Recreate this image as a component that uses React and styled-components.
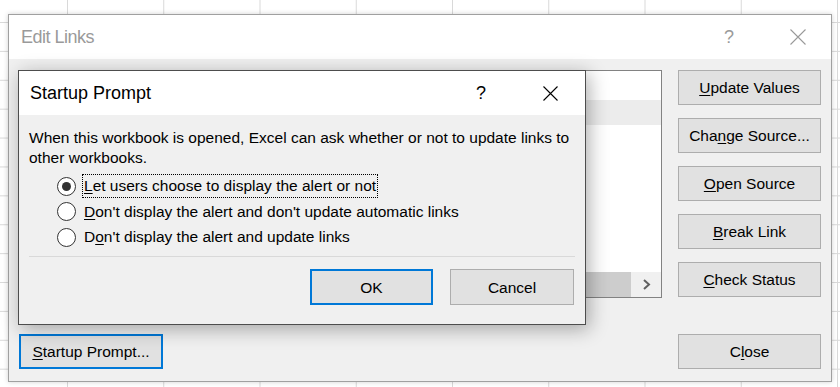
import styled, { createGlobalStyle, css } from "styled-components";

const GlobalStyle = createGlobalStyle`
  html, body {
    margin: 0;
    padding: 0;
    background: #fff;
  }
  body {
    font-family: "Liberation Sans", Arial, sans-serif;
    color: #000;
  }
`;

const Sheet = styled.div`
  width: 840px;
  height: 387px;
  overflow: hidden;
  box-sizing: border-box;
  padding: 14px 0 0 8px;
  background-color: #fff;
  background-image: linear-gradient(to right, #d9d9d9 1px, transparent 1px),
    linear-gradient(to bottom, #d9d9d9 1px, transparent 1px);
  background-size: 96.25px 28.9px;
  background-position: 67px 22px;
`;

const Window = styled.div`
  position: relative;
  width: 824px;
  height: 368px;
  box-sizing: border-box;
  border: 1px solid #a0a0a0;
  background: #f0f0f0;
  box-shadow: 0 0 5px rgba(0, 0, 0, 0.18);
  display: flex;
  flex-direction: column;
`;

const TitleBar = styled.div`
  flex-shrink: 0;
  height: 44px;
  display: flex;
  align-items: center;
  justify-content: space-between;
  padding: 0 ${(p) => p.$right}px 0 ${(p) => p.$left}px;
  background: #fff;
`;

const Title = styled.span`
  font-size: 18px;
  color: ${(p) => (p.$dim ? "#9a9a9a" : "#000")};
  letter-spacing: ${(p) => (p.$tight ? "-0.5px" : "0")};
`;

const TitleTools = styled.div`
  display: flex;
  align-items: center;
  gap: ${(p) => p.$gap}px;
  color: ${(p) => (p.$dim ? "#9a9a9a" : "#000")};
`;

const Help = styled.span`
  font-size: 18px;
  line-height: 18px;
`;

const Body = styled.div`
  flex: 1;
  display: flex;
  flex-direction: column;
  justify-content: space-between;
  padding: 11px 10px 12px 10px;
`;

const MainRow = styled.div`
  display: flex;
  justify-content: space-between;
  align-items: flex-start;
`;

const LinkList = styled.div`
  margin-left: 2px;
  width: 641px;
  height: 228px;
  box-sizing: border-box;
  border: 1px solid #828282;
  background: #fff;
  display: flex;
  flex-direction: column;
`;

const ListRow = styled.div`
  height: ${(p) => p.$h}px;
  flex-shrink: 0;
  background: ${(p) => (p.$selected ? "#ececec" : "#fff")};
`;

const ListFill = styled.div`
  flex: 1;
`;

const HScroll = styled.div`
  height: 25px;
  display: flex;
  background: #f0f0f0;
`;

const Thumb = styled.div`
  flex: 1;
  background: #cdcdcd;
`;

const ScrollArrow = styled.div`
  width: 30px;
  display: flex;
  align-items: center;
  justify-content: center;
`;

const ButtonColumn = styled.div`
  display: flex;
  flex-direction: column;
  gap: 13px;
`;

const Footer = styled.div`
  display: flex;
  justify-content: space-between;
  align-items: center;
`;

const Button = styled.button`
  width: ${(p) => p.$w || 143}px;
  height: ${(p) => p.$h || 35}px;
  box-sizing: border-box;
  margin: 0;
  padding: 1px 0 0;
  background: #e1e1e1;
  border: 1px solid #adadad;
  border-radius: 0;
  font-family: "Liberation Sans", Arial, sans-serif;
  font-size: 15.5px;
  color: #000;
  display: flex;
  align-items: center;
  justify-content: center;
  white-space: nowrap;
  ${(p) =>
    p.$default &&
    css`
      border: 2px solid #0078d7;
    `}

  u {
    text-decoration-thickness: 1px;
    text-underline-offset: 2px;
  }
`;

const Prompt = styled.div`
  position: absolute;
  left: 9px;
  top: 55px;
  width: 568px;
  height: 255px;
  box-sizing: border-box;
  border: 1px solid #4d4d4d;
  background: #f0f0f0;
  box-shadow: 3px 4px 18px rgba(0, 0, 0, 0.32);
  display: flex;
  flex-direction: column;
`;

const PromptBody = styled.div`
  display: flex;
  flex-direction: column;
  padding: 13px 10px 0 10px;
`;

const Message = styled.p`
  margin: 0;
  font-size: 15.5px;
  line-height: 20px;
  white-space: nowrap;
`;

const Options = styled.div`
  margin: 6px 0 0 28px;
  display: flex;
  flex-direction: column;
  gap: 1.5px;
`;

const Option = styled.label`
  height: 24px;
  display: flex;
  align-items: center;
  gap: 6px;
`;

const Radio = styled.span`
  width: 19px;
  height: 19px;
  box-sizing: border-box;
  border: 1px solid #333;
  border-radius: 50%;
  background: #fff;
  display: flex;
  align-items: center;
  justify-content: center;

  &::after {
    content: "";
    width: 9px;
    height: 9px;
    border-radius: 50%;
    background: #333;
    display: ${(p) => (p.$checked ? "block" : "none")};
  }
`;

const OptionLabel = styled.span`
  font-size: 15.5px;
  line-height: 22px;
  padding: 0 1px;
  border: 1px dotted ${(p) => (p.$focus ? "#000" : "transparent")};
  white-space: nowrap;

  u {
    text-decoration-thickness: 1px;
    text-underline-offset: 2px;
  }
`;

const Separator = styled.div`
  margin-top: 7px;
  height: 1px;
  background: #d9d9d9;
`;

const PromptButtons = styled.div`
  margin-top: 12px;
  padding-right: 1px;
  display: flex;
  justify-content: flex-end;
  gap: 17px;
`;

const CloseIcon = ({ size, color }) => (
  <svg width={size} height={size} viewBox={`0 0 ${size} ${size}`}>
    <path
      d={`M0.5 0.5 L${size - 0.5} ${size - 0.5} M${size - 0.5} 0.5 L0.5 ${size - 0.5}`}
      stroke={color}
      strokeWidth="1.1"
      fill="none"
    />
  </svg>
);

const Chevron = () => (
  <svg width="9" height="11" viewBox="0 0 9 11">
    <path d="M2 1 L7 5.5 L2 10" stroke="#606060" strokeWidth="2" fill="none" />
  </svg>
);

const sideButtons = [
  ["", "U", "pdate Values"],
  ["Cha", "n", "ge Source..."],
  ["", "O", "pen Source"],
  ["", "B", "reak Link"],
  ["", "C", "heck Status"],
];

const options = [
  { pre: "", key: "L", post: "et users choose to display the alert or not", checked: true },
  { pre: "", key: "D", post: "on't display the alert and don't update automatic links" },
  { pre: "D", key: "o", post: "n't display the alert and update links" },
];

function App() {
  return (
    <>
      <GlobalStyle />
      <Sheet>
        <Window>
          <TitleBar $left={12} $right={25}>
            <Title $dim $tight>
              Edit Links
            </Title>
            <TitleTools $gap={56} $dim>
              <Help>?</Help>
              <CloseIcon size={16} color="#9a9a9a" />
            </TitleTools>
          </TitleBar>
          <Body>
            <MainRow>
              <LinkList>
                <ListRow $h={29} />
                <ListRow $h={25} $selected />
                <ListFill />
                <HScroll>
                  <Thumb />
                  <ScrollArrow>
                    <Chevron />
                  </ScrollArrow>
                </HScroll>
              </LinkList>
              <ButtonColumn>
                {sideButtons.map(([pre, key, post]) => (
                  <Button key={pre + key + post}>
                    {pre}
                    <u>{key}</u>
                    {post}
                  </Button>
                ))}
              </ButtonColumn>
            </MainRow>
            <Footer>
              <Button $w={144} $default>
                <u>S</u>tartup Prompt...
              </Button>
              <Button>
                C<u>l</u>ose
              </Button>
            </Footer>
          </Body>

          <Prompt>
            <TitleBar $left={11} $right={27}>
              <Title>Startup Prompt</Title>
              <TitleTools $gap={57}>
                <Help>?</Help>
                <CloseIcon size={15} color="#000" />
              </TitleTools>
            </TitleBar>
            <PromptBody>
              <Message>
                When this workbook is opened, Excel can ask whether or not to update links to
                <br />
                other workbooks.
              </Message>
              <Options>
                {options.map((o) => (
                  <Option key={o.post}>
                    <Radio $checked={o.checked} />
                    <OptionLabel $focus={o.checked}>
                      {o.pre}
                      <u>{o.key}</u>
                      {o.post}
                    </OptionLabel>
                  </Option>
                ))}
              </Options>
              <Separator />
              <PromptButtons>
                <Button $w={123} $h={36} $default>
                  OK
                </Button>
                <Button $w={124} $h={36}>
                  Cancel
                </Button>
              </PromptButtons>
            </PromptBody>
          </Prompt>
        </Window>
      </Sheet>
    </>
  );
}

export default App;
